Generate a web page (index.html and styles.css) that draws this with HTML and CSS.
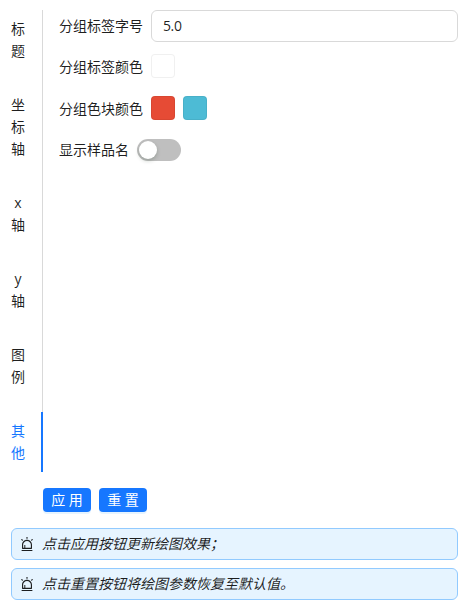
FILE: index.html
```
<!doctype html>
<html lang="zh-CN">
<head>
	<meta charset="utf-8" />
	<meta name="viewport" content="width=device-width, initial-scale=1" />

	<title>绘图参数</title>

<link rel="stylesheet" href="styles.css">
</head>
<body>

<!-- icon shared by both tips -->
<svg class="defs">
	<symbol id="alert" viewBox="64 64 896 896">
		<path d="M193 796c0 17.7 14.3 32 32 32h574c17.7 0 32-14.3 32-32V563c0-176.2-142.8-319-319-319S193 386.8 193 563v233zm72-233c0-136.4 110.6-247 247-247s247 110.6 247 247v193H404V585c0-5.5-4.5-10-10-10h-44c-5.5 0-10 4.5-10 10v171h-75V563zm-48.1-252.5l39.6-39.6c3.1-3.1 3.1-8.2 0-11.3l-67.9-67.9a8.03 8.03 0 00-11.3 0l-39.6 39.6a8.03 8.03 0 000 11.3l67.9 67.9c3.1 3.1 8.1 3.1 11.3 0zm669.6-79.2l-39.6-39.6a8.03 8.03 0 00-11.3 0l-67.9 67.9a8.03 8.03 0 000 11.3l39.6 39.6c3.1 3.1 8.2 3.1 11.3 0l67.9-67.9c3.1-3.2 3.1-8.2 0-11.3zM832 892H192c-17.7 0-32 14.3-32 32v24c0 4.4 3.6 8 8 8h688c4.4 0 8-3.6 8-8v-24c0-17.7-14.3-32-32-32zM484 180h56c4.4 0 8-3.6 8-8V76c0-4.4-3.6-8-8-8h-56c-4.4 0-8 3.6-8 8v96c0 4.4 3.6 8 8 8z"/>
	</symbol>
</svg>

<div class="tabs">
	<div class="nav">
		<a class="tab">标<br />题</a>
		<a class="tab">坐<br />标<br />轴</a>
		<a class="tab">x<br />轴</a>
		<a class="tab">y<br />轴</a>
		<a class="tab">图<br />例</a>
		<a class="tab active">其<br />他</a>
	</div>

	<div class="panel">
		<div class="row">
			<label for="size">分组标签字号</label>
			<input class="input" id="size" type="text" value="5.0" />
		</div>
		<div class="row colors">
			<label>分组标签颜色</label>
			<span class="color white"></span>
		</div>
		<div class="row colors">
			<label>分组色块颜色</label>
			<span class="color red"></span>
			<span class="color cyan"></span>
		</div>
		<div class="row">
			<label>显示样品名</label>
			<span class="switch"></span>
		</div>
	</div>
</div>

<div class="buttons">
	<button class="button">应 用</button>
	<button class="button">重 置</button>
</div>

<div class="tip">
	<svg class="icon"><use href="#alert"/></svg>
	<i>点击应用按钮更新绘图效果；</i>
</div>

<div class="tip">
	<svg class="icon"><use href="#alert"/></svg>
	<i>点击重置按钮将绘图参数恢复至默认值。</i>
</div>

</body>
</html>
```

FILE: styles.css
```
* {
	box-sizing: border-box;
}

body {
	margin:  0;
	padding: 10px 11px 0 11px;

	background-color: #fff;
	color: rgba(0, 0, 0, 0.88);

	font: 14px/22px "Open Sans", "Noto Sans CJK SC", sans-serif;
}

.defs {
	display: block;
	width:  0;
	height: 0;
}

.tabs {
	display: flex;
}

.nav {
	display: flex;
	flex-direction: column;
	gap: 16px;

	width: 32px;
	box-shadow: inset -1px 0 #d9d9d9;
}

.tab {
	padding: 8px 16px 8px 0;

	border-right: 2px solid transparent;
	text-align: center;
	white-space: nowrap;
}

.tab.active {
	border-right-color: #1677ff;
	color: #1677ff;
}

.panel {
	flex: 1;
	padding-left: 16px;
}

.row {
	display: flex;
	align-items: center;
	gap: 8px;

	height: 32px;
	margin-bottom: 10px;
}

.row:first-child {
	margin-bottom: 8px;
}

.row label {
	white-space: nowrap;
}

.colors label {
	padding-top: 2px;
}

.input {
	flex: 1;
	min-width: 0;
	height: 32px;
	padding: 3px 11px 5px 11px;

	border: 1px solid #d9d9d9;
	border-radius: 6px;
	outline: none;

	color: inherit;
	font: inherit;
	letter-spacing: -0.4px;
}

.color {
	width:  24px;
	height: 24px;

	border-radius: 4px;
	box-shadow: inset 0 0 0 1px rgba(0, 0, 0, 0.06);
}

.white {
	background-color: #fff;
}

.red {
	background-color: #e64b35;
}

.cyan {
	background-color: #4dbbd5;
}

.switch {
	width:  44px;
	height: 22px;
	padding: 2px;

	border-radius: 11px;
	background-color: #bfbfbf;
}

.switch::before {
	content: "";
	display: block;

	width:  18px;
	height: 18px;

	border-radius: 9px;
	background-color: #fff;
	box-shadow: 0 2px 4px rgba(0, 35, 11, 0.2);
}

.buttons {
	display: flex;
	gap: 8px;

	margin: 16px 0 16px 32px;
}

.button {
	width:  48px;
	height: 24px;
	padding: 0;

	border: 0;
	border-radius: 4px;
	background-color: #1677ff;
	box-shadow: 0 2px 0 rgba(5, 145, 255, 0.1);

	color: #fff;
	font: inherit;
}

.tip {
	display: flex;
	align-items: center;
	gap: 8px;

	height: 32px;
	margin-bottom: 8px;
	padding: 0 8px;

	border: 1px solid #91caff;
	border-radius: 6px;
	background-color: #e6f4ff;
}

.icon {
	width:  14px;
	height: 14px;

	fill: currentColor;
}
```
